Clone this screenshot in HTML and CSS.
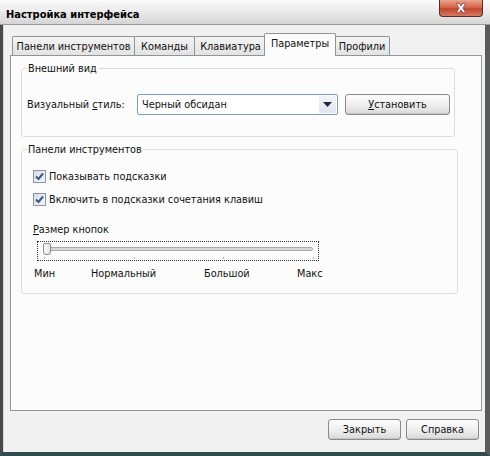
FILE: index.html
```html
<!DOCTYPE html>
<html lang="ru">
<head>
<meta charset="utf-8">
<title>Настройка интерфейса</title>
<link rel="stylesheet" href="styles.css">
</head>
<body>
<div class="window">
  <div class="titlebar">
    <span class="title">Настройка интерфейса</span>
    <div class="close">
      <svg width="44" height="16" viewBox="0 0 44 16">
        <path d="M17 3 L20 3 L22 6 L24 3 L27 3 L24 8 L27 13 L24 13 L22 10 L20 13 L17 13 L20 8 Z" fill="#fff" stroke="#7a3a30" stroke-width="0.8"/>
      </svg>
    </div>
  </div>
  <div class="client">
    <div class="tabs">
      <div class="tab t1">Панели инструментов</div>
      <div class="tab t2">Команды</div>
      <div class="tab t3">Клавиатура</div>
      <div class="tab t4 active">Параметры</div>
      <div class="tab t5">Профили</div>
    </div>
    <div class="panel">
      <fieldset class="group g1">
        <legend>Внешний вид</legend>
        <div class="stylerow">
          <span class="lbl">Визуальный <u>с</u>тиль:</span>
          <div class="combo">
            <span class="combo-text">Черный обсидан</span>
            <span class="combo-btn"><svg width="9" height="5" viewBox="0 0 9 5"><path d="M0 0 H9 L4.5 5 Z" fill="#1c2a4a"/></svg></span>
          </div>
          <div class="btn btn-set"><u>У</u>становить</div>
        </div>
      </fieldset>
      <fieldset class="group g2">
        <legend>Панели инструментов</legend>
        <div class="check c1"><span class="box"><svg width="9" height="9" viewBox="0 0 9 9"><path d="M1 4.5 L3.5 7 L8 1.5" fill="none" stroke="#3a5a8c" stroke-width="2"/></svg></span><span>Показывать подсказки</span></div>
        <div class="check c2"><span class="box"><svg width="9" height="9" viewBox="0 0 9 9"><path d="M1 4.5 L3.5 7 L8 1.5" fill="none" stroke="#3a5a8c" stroke-width="2"/></svg></span><span>Включить в подсказки сочетания клавиш</span></div>
        <div class="sizelbl"><u>Р</u>азмер кнопок</div>
        <div class="slider">
          <div class="track"></div>
          <div class="thumb"></div>
          <div class="ticks"><i></i><i></i><i></i><i></i></div>
        </div>
        <div class="scale">
          <span class="s1">Мин</span>
          <span class="s2">Нормальный</span>
          <span class="s3">Большой</span>
          <span class="s4">Макс</span>
        </div>
      </fieldset>
    </div>
    <div class="footer">
      <div class="btn btn-foot">Закрыть</div>
      <div class="btn btn-foot">Справка</div>
    </div>
  </div>
</div>
</body>
</html>
```

FILE: styles.css
```css
* { box-sizing: border-box; }
html, body { margin: 0; padding: 0; }
body {
  width: 490px;
  height: 456px;
  overflow: hidden;
  font-family: "DejaVu Sans Condensed", "DejaVu Sans", sans-serif;
  font-stretch: semi-condensed;
  font-size: 10.8px;
  color: #111;
  background: #fff;
}
u { text-decoration: underline; text-underline-offset: 1px; }

.window {
  width: 490px;
  height: 456px;
  display: flex;
  flex-direction: column;
  background: #f1f1f1;
  border-left: 3px solid #4a4a4a;
  border-right: 5px solid #5a5a5a;
  border-bottom: 4px solid #2f4b4d;
  box-shadow: inset 1px 0 0 #d8d8d8;
}

.titlebar {
  height: 25px;
  flex: none;
  display: flex;
  align-items: flex-start;
  justify-content: space-between;
  background: linear-gradient(#fbfbfb, #ececec 45%, #dedede 80%, #d4d4d4);
  border-bottom: 1px solid #9a9a9a;
  margin-left: -3px;
  margin-right: -5px;
  padding-left: 6px;
  padding-right: 7px;
}
.title {
  font-weight: bold;
  font-size: 11px;
  margin-top: 8px;
  color: #000;
}
.close {
  width: 44px;
  height: 17px;
  border: 1px solid #5e2a22;
  border-top: none;
  border-radius: 0 0 4px 4px;
  background: linear-gradient(#eba48f, #d9674c 45%, #c0452e 55%, #d87a60);
  display: flex;
}

.client {
  flex: 1;
  display: flex;
  flex-direction: column;
  padding: 8px 4px 0 7px;
}

.tabs {
  height: 22px;
  display: flex;
  align-items: flex-end;
  padding-left: 2px;
  position: relative;
  z-index: 2;
}
.tab {
  height: 19px;
  border: 1px solid #8e9596;
  border-bottom: none;
  border-radius: 2px 2px 0 0;
  background: linear-gradient(#f4f4f4, #e2e2e2);
  padding-top: 3px;
  text-align: center;
  white-space: nowrap;
  margin-right: -1px;
}
.t1 { width: 123px; }
.t2 { width: 61px; }
.t3 { width: 73px; }
.t4 { width: 72px; }
.t5 { width: 56px; }
.tab.active {
  background: #fcfcfc;
  padding-top: 3px;
  margin-left: -2px;
  margin-right: -2px;
  position: relative;
  z-index: 3;
  height: 23px;
  margin-bottom: -1px;
}

.panel {
  width: 472px;
  height: 356px;
  border: 1px solid #8e9596;
  background: #fcfcfc;
  padding: 6px 0 0 10px;
  display: flex;
  flex-direction: column;
}

.group {
  margin: 0;
  padding: 0;
  border: 1px solid #dcdcdc;
  border-radius: 3px;
}
.group legend {
  padding: 0 2px 0 1px;
  margin-left: 5px;
  line-height: 13px;
}
.g1 { width: 434px; height: 75px; }
.g2 { width: 437px; height: 151px; margin-top: 6px; }

.stylerow {
  display: flex;
  align-items: center;
  margin-top: 18px;
  padding-left: 5px;
}
.lbl { width: 110px; }
.combo {
  width: 201px;
  height: 21px;
  border: 1px solid #7f9db9;
  border-radius: 2px;
  background: #fff;
  display: flex;
  align-items: center;
  justify-content: space-between;
  padding: 1px;
}
.combo-text { padding-left: 3px; }
.combo-btn {
  width: 17px;
  height: 17px;
  background: linear-gradient(#f3f4f8, #e1e4ec);
  display: flex;
  align-items: center;
  justify-content: center;
}
.btn {
  height: 21px;
  border: 1px solid #8a8a8a;
  border-radius: 3px;
  background: linear-gradient(#fdfdfd, #ececec 60%, #d8d8d8);
  display: flex;
  align-items: center;
  justify-content: center;
  box-shadow: inset 0 -1px 0 #c4c4c4;
}
.btn-set { width: 105px; margin-left: 7px; margin-top: 1px; }

.check {
  display: flex;
  align-items: center;
  gap: 3px;
  margin-left: 11px;
  height: 13px;
}
.c1 { margin-top: 14px; }
.c2 { margin-top: 10px; }
.box {
  width: 13px;
  height: 13px;
  border: 1px solid #8a96a8;
  background: linear-gradient(135deg, #d8dbe2, #f6f7f9);
  display: flex;
  align-items: center;
  justify-content: center;
}
.sizelbl { margin: 17px 0 0 11px; line-height: 13px; }

.slider {
  position: relative;
  width: 282px;
  height: 20px;
  margin: 5px 0 0 15px;
  border: 1px dotted #333;
}
.track {
  position: absolute;
  left: 5px;
  top: 5px;
  width: 270px;
  height: 4px;
  border: 1px solid #a9a9a9;
  border-radius: 2px;
  background: #d7d7d7;
}
.thumb {
  position: absolute;
  left: 5px;
  top: 1px;
  width: 8px;
  height: 12px;
  border: 1px solid #8c8c8c;
  border-radius: 2px 2px 3px 3px;
  background: linear-gradient(90deg, #fafafa, #e4e4e4);
}
.ticks {
  position: absolute;
  left: 6px;
  right: 4px;
  top: 15px;
  display: flex;
  justify-content: space-between;
}
.ticks i {
  display: block;
  width: 1px;
  height: 2px;
  background: #b0b0b0;
}

.scale {
  display: flex;
  margin: 6px 0 0 12px;
  line-height: 13px;
}
.s1 { width: 57px; }
.s2 { width: 113px; }
.s3 { width: 93px; }

.footer {
  display: flex;
  justify-content: flex-end;
  gap: 5px;
  padding: 8px 2px 0 0;
}
.btn-foot { width: 73px; }
```
